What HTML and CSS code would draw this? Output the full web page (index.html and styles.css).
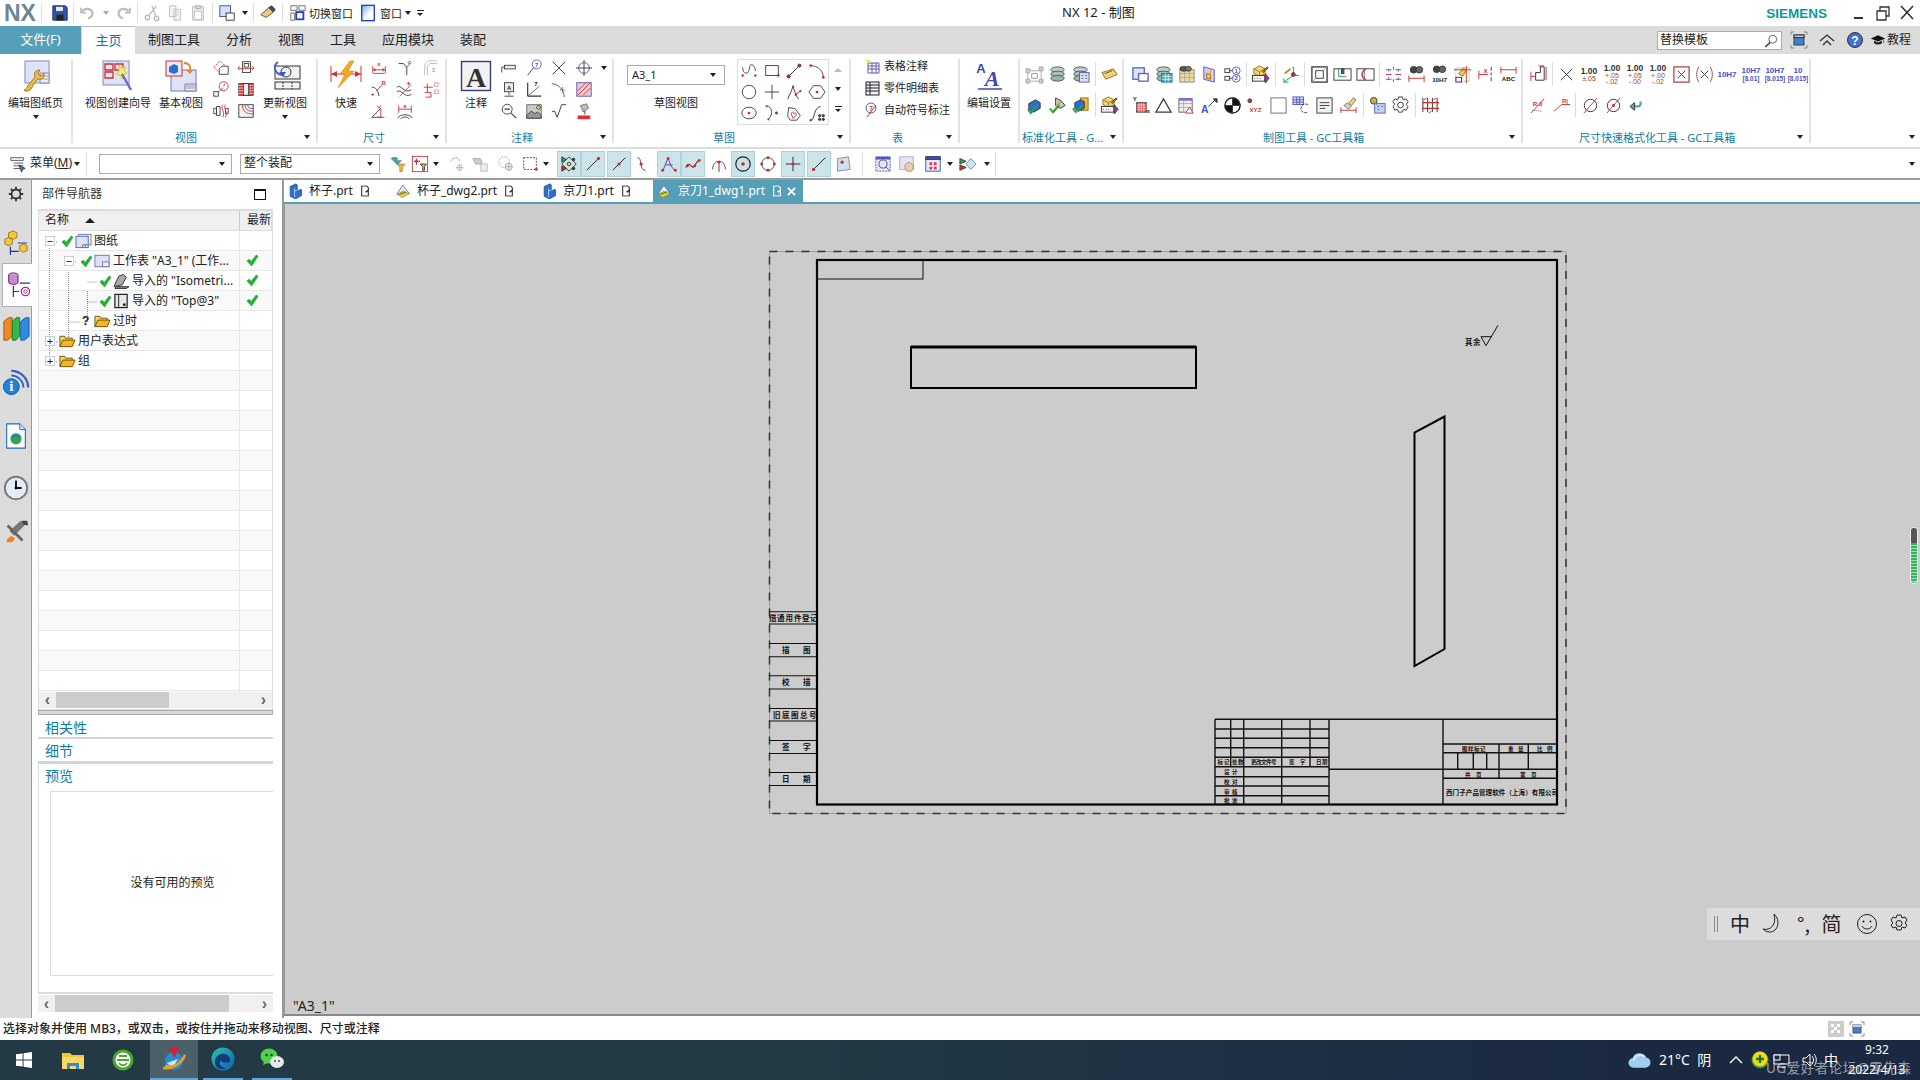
FILE: index.html
```html
<!DOCTYPE html>
<html lang="zh-CN">
<head>
<meta charset="utf-8">
<title>NX 12 - 制图</title>
<link rel="stylesheet" href="styles.css">
</head>
<body>
<svg class="defs" xmlns="http://www.w3.org/2000/svg">
  <symbol id="ck" viewBox="0 0 14 14"><path d="M1 7.5 3.5 5.5 5.5 8 11 1 13 2.5 6 13z" fill="#1fb52f" stroke="#0e8a1e" stroke-width=".5"/></symbol>
  <symbol id="fo" viewBox="0 0 18 16"><path d="M1 14V3h5l1 2h7v3" fill="#f4d678" stroke="#6a5010"/><path d="M1 14 4 7h13l-3 7z" fill="#f7b51e" stroke="#6a5010"/></symbol>
  <symbol id="blk" viewBox="0 0 16 18"><path d="M2 4 8 1l2 1v7l4-2 1 1v6l-7 4-6-3z" fill="#2c6fd0" stroke="#1a4a98" stroke-width=".8"/><path d="M7 6v10M7 9l3-1" stroke="#bcd4f6" fill="none"/></symbol>
  <symbol id="dw" viewBox="0 0 18 18"><path d="M1 13 8 2l8 10z" fill="#eef" stroke="#5a5ab0"/><path d="M2 13l5 4 9-5-8-3z" fill="#f0c838" stroke="#a07010" stroke-width=".6"/><path d="M4 13l8-3" stroke="#2f9a4a" stroke-width="1.4"/></symbol>
  <symbol id="dc" viewBox="0 0 12 14"><path d="M2 1h6l2 2v10H2z" fill="none" stroke="currentColor" stroke-width="1.3"/><path d="M6 8l4-3 1 1-3 3z" fill="currentColor"/></symbol>
  <symbol id="ln" viewBox="0 0 20 20"><path d="M3 17 17 3" stroke="#222" fill="none"/><circle cx="4" cy="16" r="1.7" fill="#cc2a2a"/><circle cx="16" cy="4" r="1.7" fill="#cc2a2a"/></symbol>
  <symbol id="pack" viewBox="0 0 20 20"><path d="M3 4 9 1l6 3v5l-6 3-6-3z" fill="#f5d37a" stroke="#a07a20"/><path d="M3 4l6 3 6-3M9 7v5" fill="none" stroke="#a07a20"/><rect x="1.500" y="11" width="13" height="6" fill="#fff" stroke="#333"/><path d="M3 14h1m2 0h1m2 0h1" stroke="#333"/><path d="M15 9l4 5-4 5z" fill="#a33aa8"/><path d="M12 7l5-5 1 1-5 5z" fill="#c99b3b"/></symbol>
  <symbol id="stack" viewBox="0 0 20 20"><ellipse cx="10" cy="5" rx="7" ry="3" fill="#bfcfc4" stroke="#556"/><ellipse cx="10" cy="9.500" rx="7" ry="3" fill="#a8c0b0" stroke="#556"/><ellipse cx="10" cy="14" rx="7" ry="3" fill="#9cb5a4" stroke="#556"/></symbol>
</svg>

<div class="app">
  <header class="titlebar">
    <span class="nx">NX</span>
    <i class="tv m5"></i>
    <span class="t m6"><svg class="i" viewBox="0 0 20 20"><path d="M2 2h14l2 2v14H2z" fill="#2e54b4" stroke="#1c2f78"/><rect x="5" y="2.500" width="9" height="6" fill="#dfe8f8"/><rect x="6" y="12" width="8" height="6" fill="#222"/></svg></span>
    <i class="tv m2"></i>
    <span class="t m25"><svg class="i" viewBox="0 0 20 20"><path d="M3 9c3-5 11-5 12 1 0 3-2 5-5 6" stroke="#bbb" stroke-width="2.400"/><path d="M2 4v6h6" fill="#ccc" stroke="#aaa"/></svg></span><span class="cr"><b class="down dim"></b></span>
    <span class="t"><svg class="i" viewBox="0 0 20 20"><path d="M17 9c-3-5-11-5-12 1 0 3 2 5 5 6" stroke="#bbb" stroke-width="2.400"/><path d="M18 4v6h-6" fill="#ccc" stroke="#aaa"/></svg></span>
    <i class="tv m25"></i>
    <span class="t m25"><svg class="i" viewBox="0 0 20 20"><path d="M15 2 7 12M10 2l4 11" stroke="#bbb" stroke-width="1.500"/><circle cx="5" cy="15" r="2.500" stroke="#bbb" stroke-width="1.500"/><circle cx="15" cy="16" r="2.500" stroke="#bbb" stroke-width="1.500"/></svg></span>
    <span class="t"><svg class="i" viewBox="0 0 20 20"><path d="M4 2h7v12H4zM9 6h7v12H9z" fill="#f4f4f4" stroke="#bbb"/><path d="M11 9h3m-3 3h3" stroke="#ccc"/></svg></span>
    <span class="t"><svg class="i" viewBox="0 0 20 20"><path d="M4 3h12v15H4z" fill="#eee" stroke="#bbb"/><path d="M7 2h6v3H7z" fill="#ddd" stroke="#aaa"/><path d="M6 8h8v9H6z" fill="#fff" stroke="#bbb"/></svg></span>
    <i class="tv m25"></i>
    <span class="t m25"><svg class="i" viewBox="0 0 20 20"><rect x="2" y="2" width="12" height="12" fill="#d8e0f8" stroke="#2d4aa8"/><rect x="9" y="10" width="9" height="8" fill="#fff" stroke="#333"/></svg></span><span class="cr"><b class="down"></b></span>
    <i class="tv m25"></i>
    <span class="t m2"><svg class="i" viewBox="0 0 20 20"><path d="M2 12 11 4l5 5-8 6z" fill="#e4c888" stroke="#6a5030"/><path d="M11 4l3-2 4 4-2 3z" fill="#2b4a9c"/></svg></span>
    <i class="tv m3"></i>
    <span class="t m3"><svg class="i" viewBox="0 0 20 20"><path d="M2 2h7v5H2zM11 2h7v5h-7zM2 10h4v8H2z" fill="#fff" stroke="#666"/><rect x="8" y="9" width="8" height="8" fill="#fff" stroke="#1f3fd0" stroke-width="2"/></svg></span>
    <span class="tt">切换窗口</span>
    <span class="t m3"><svg class="i" viewBox="0 0 20 20"><defs><linearGradient id="wg" x1="0" y1="0" x2="1" y2="1"><stop offset="0" stop-color="#7fa8e8"/><stop offset=".6" stop-color="#fff"/></linearGradient></defs><rect x="3" y="1.500" width="14" height="17" fill="url(#wg)" stroke="#1a3fd8" stroke-width="1.500"/></svg></span>
    <span class="tt m1">窗口</span><span class="cr"><b class="down"></b></span><span class="cr"><b class="more"></b></span>
    <span class="apptitle">NX 12 - 制图</span>
    <span class="siemens">SIEMENS</span>
    <span class="wc"><svg class="i" viewBox="0 0 20 20"><path d="M5 15h9" stroke="#333" stroke-width="2"/></svg></span>
    <span class="wc"><svg class="i" viewBox="0 0 20 20"><path d="M4 8h9v9H4zM7 8V4h9v9h-3" stroke="#333" stroke-width="1.300"/></svg></span>
    <span class="wc"><svg class="i" viewBox="0 0 20 20"><path d="M4 3l12 13M16 3 4 16" stroke="#333" stroke-width="1.600"/></svg></span>
  </header>

  <nav class="tabs">
    <span class="file">文件(F)</span>
    <span class="tab active">主页</span>
    <span class="tab">制图工具</span><span class="tab">分析</span><span class="tab">视图</span><span class="tab">工具</span><span class="tab">应用模块</span><span class="tab">装配</span>
    <span class="search">替换模板<svg class="srch" viewBox="0 0 16 16"><circle cx="10" cy="6" r="4.500" fill="#fff" stroke="#555"/><path d="M7 9.500 1.500 15" stroke="#555" stroke-width="2"/></svg></span>
    <span class="ti"><svg class="i" viewBox="0 0 20 20"><path d="M2 5V2h3M15 2h3v3M2 15v3h3M18 15v3h-3" stroke="#888"/><rect x="5" y="5" width="10" height="10" fill="#3f7fd0" stroke="#344"/><rect x="5" y="5" width="10" height="2.500" fill="#ccd"/></svg></span>
    <span class="ti"><svg class="i" viewBox="0 0 20 20"><path d="M3 11l7-6 7 6M6 15l4-4 4 4" stroke="#333" stroke-width="1.300"/></svg></span>
    <span class="ti"><svg class="i" viewBox="0 0 20 20"><circle cx="10" cy="10" r="7.500" fill="#3f6fd8"/><text x="10" y="14.500" class="qm">?</text></svg></span>
    <span class="cap"><svg class="i" viewBox="0 0 20 20"><path d="M1 8 10 4l9 4-9 4z" fill="#111"/><path d="M5 11v3c3 2 7 2 10 0v-3l-5 2z" fill="#222"/><path d="M17 9v5" stroke="#25c"/></svg>教程</span>
  </nav>

  <section class="ribbon">
    <div class="group g1"><div class="body">
      <div class="lg"><svg class="big" viewBox="0 0 32 32"><rect x="5" y="1" width="24" height="22" fill="#dfe3f6" stroke="#8088c8"/><path d="M20 13h9v10h-9z" fill="#eee" stroke="#8088c8"/><path d="M21 16h7m-7 3h7" stroke="#999"/><path d="M4 30c3 0 3-5 7-8l4-5c-2-4 1-7 5-7l-2 4 3 2 3-3c1 4-2 7-6 6l-5 6c-1 4-4 7-8 6z" fill="#e8bb4a" stroke="#a07a20"/></svg><span>编辑图纸页</span><b class="down"></b></div>
    </div></div>

    <div class="group g2"><div class="body">
      <div class="lg w66 ml12"><svg class="big" viewBox="0 0 32 32"><rect x="1" y="1" width="26" height="24" fill="#dfe3f6" stroke="#8088c8"/><path d="M3 4h8v6H3zM13 4h8v6h-8zM3 12h8v6H3z" fill="none" stroke="#cc3030" stroke-width="1.300"/><path d="M17 5l2 3 4-1-1 4 3 2-4 2-1 4-2-4-4-1 3-2z" fill="#f2ee70" stroke="#d8c840"/><path d="M20 14 29 30" stroke="#6a70c8" stroke-width="2.500"/></svg><span>视图创建向导</span></div>
      <div class="lg w44 ml8"><svg class="big" viewBox="0 0 32 32"><rect x="6" y="10" width="25" height="21" fill="#dfe3f6" stroke="#7078c8"/><path d="M20 24h11v7H20z" fill="#eee" stroke="#7078c8"/><path d="M21 26h9m-9 2h9" stroke="#999"/><rect x="1" y="1" width="16" height="15" fill="#e8e8f4" stroke="#cc3030"/><path d="M4 7 9 4l4 2v6l-4 2-5-2z" fill="#2c6fd0"/><path d="M19 3c5 0 7 3 6 8" stroke="#e08a20" stroke-width="1.800" fill="none"/><path d="M21 10h7l-3 4z" fill="#e08a20"/></svg><span>基本视图</span></div>
      <div class="ic2 ml55">
        <span class="c"><svg class="i" viewBox="0 0 20 20"><path d="M2 9 9 2l5 5-7 7z" class="r" stroke-dasharray="2 1"/><path d="M8 17v-6l3-3h7v9z" fill="#fff"/></svg></span>
        <span class="c"><svg class="i" viewBox="0 0 20 20"><rect x="6" y="3" width="9" height="12"/><rect x="8" y="5" width="5" height="4"/><path d="M1 10c2 1 16 1 18 0M1 10l2-2M1 10l2 2M19 10l-2-2M19 10l-2 2" class="r"/></svg></span>
        <span class="c"><svg class="i" viewBox="0 0 20 20"><circle cx="13" cy="7" r="5" class="r"/><path d="M13 7l1-3M2 17 12 9" class="r"/><rect x="2" y="13" width="5" height="5" fill="#fff"/></svg></span>
        <span class="c"><svg class="i" viewBox="0 0 20 20"><rect x="2" y="4" width="16" height="13" fill="#d44"/><path d="M2 6h16M2 9h16M2 12h16M2 15h16" stroke="#fff" stroke-dasharray="2 1"/><rect x="7" y="4" width="6" height="13" fill="#eee" stroke="#333"/></svg></span>
        <span class="c"><svg class="i" viewBox="0 0 20 20"><path d="M2 7h3v6H2zM15 7h3v6h-3zM5 5h4v10H5z"/><path d="M12 3c-3 4 3 8 0 14M15 3c-3 4 3 8 0 14" class="r"/></svg></span>
        <span class="c"><svg class="i" viewBox="0 0 20 20"><rect x="2" y="3" width="16" height="14" fill="#f2f2f2"/><path d="M6 3c0 7 4 11 12 10M9 3c0 5 3 8 9 7" class="r"/><path d="M12 3c0 3 2 5 6 4" stroke="#5058c0"/></svg></span>
      </div>
      <div class="lg w44 ml45"><svg class="big" viewBox="0 0 32 32"><rect x="6" y="6" width="25" height="13" fill="#f2f2f2" stroke="#333"/><rect x="6" y="22" width="25" height="7" fill="#f2f2f2" stroke="#333"/><path d="M14 22v7M23 22v7" stroke="#333" stroke-dasharray="2 1"/><circle cx="17" cy="12" r="5" fill="none" stroke="#333"/><path d="M13 15C6 14 3 6 9 2" fill="none" stroke="#5058d0" stroke-width="1.800"/><path d="M10 12h7l-3 5z" fill="#2d5ec8"/></svg><span>更新视图</span><b class="down"></b></div>
    </div><div class="foot pl102"><span>视图</span><b class="down"></b></div></div>

    <div class="group g3"><div class="body">
      <div class="lg w30 ml13"><svg class="big" viewBox="0 0 32 32"><path d="M1 6v16M31 6v16" stroke="#c9343a"/><path d="M1 14h30" stroke="#c9343a"/><path d="M1 14l6-3v6zM31 14l-6-3v6z" fill="#c9343a"/><path d="M20 1 10 14h5L8 28l16-17h-6l6-10z" fill="#f5a623" stroke="#e2851a" stroke-width=".6"/></svg><span>快速</span></div>
      <div class="ic3 ml5">
        <span class="c"><svg class="i" viewBox="0 0 20 20"><path d="M3 8v8M17 8v8M3 12h14M4 16h12" class="r"/><path d="M3 12l3-2v4zM17 12l-3-2v4z" fill="#c9343a" stroke="none"/><text x="10" y="8" class="tiny red">x</text></svg></span>
        <span class="c"><svg class="i" viewBox="0 0 20 20"><path d="M3 5h5l4 4v9" fill="#f4f4f4"/><path d="M11 10l6-6" class="r"/><text x="15" y="5" class="tiny red">c</text></svg></span>
        <span class="c"><svg class="i" viewBox="0 0 20 20"><path d="M3 18V8c0-4 3-6 6-6h8M6 18V9c0-2 2-4 4-4h7" stroke="#bbb"/><text x="13" y="14" class="tiny gry">Σ</text></svg></span>
        <span class="c"><svg class="i" viewBox="0 0 20 20"><path d="M2 8c4 0 7 3 8 10" /><path d="M7 12l7-7" class="r"/><text x="15" y="6" class="tiny red">R</text><text x="3" y="18" class="tiny blk">+</text></svg></span>
        <span class="c"><svg class="i" viewBox="0 0 20 20"><path d="M1 8c5-4 8 8 16 3M1 13c5-4 8 8 16 3" /><path d="M4 18 17 5" class="r"/><path d="M14 2v4M12 4h4" class="r"/></svg></span>
        <span class="c"><svg class="i" viewBox="0 0 20 20"><path d="M2 8h10M6 4v10M3 14h7v5M4 19h6" class="r"/><path d="M14 3h4v4h-4zM14 11h4v4h-4z" class="r" stroke-dasharray="1 1"/></svg></span>
        <span class="c"><svg class="i" viewBox="0 0 20 20"><path d="M2 17 12 7M2 17h11"/><path d="M8 4l2 3 2-3M12 7v10M9 17h7" class="r"/></svg></span>
        <span class="c"><svg class="i" viewBox="0 0 20 20"><path d="M3 4v8M17 4v8M3 8h14" class="r"/><path d="M2 18c2-5 14-5 16 0M5 19c2-3 8-3 10 0"/><text x="10" y="7" class="tiny red">x</text></svg></span>
      </div>
    </div><div class="foot pl45"><span>尺寸</span><b class="down"></b></div></div>

    <div class="group g4"><div class="body">
      <div class="lg w30 ml14"><svg class="big" viewBox="0 0 32 32"><rect x="1.500" y="1.500" width="29" height="29" fill="#f2f2f2" stroke="#3f3a72" stroke-width="1.400"/><text x="16" y="27" class="bigA">A</text></svg><span>注释</span></div>
      <div class="ic4 ml55">
        <span class="c"><svg class="i" viewBox="0 0 20 20"><path d="M2 15V9h3"/><rect x="5" y="7" width="12" height="4" fill="#eee"/></svg></span>
        <span class="c"><svg class="i" viewBox="0 0 20 20"><circle cx="13" cy="6" r="5" stroke="#5058c0"/><text x="13" y="9" class="tiny blu">7</text><path d="M3 18 10 9"/></svg></span>
        <span class="c"><svg class="i" viewBox="0 0 20 20"><path d="M3 3l14 14M17 3 3 17" stroke="#333"/></svg></span>
        <span class="c"><svg class="i" viewBox="0 0 20 20"><circle cx="10" cy="10" r="6" stroke="#5058c0"/><path d="M10 1v18M1 10h18" stroke="#333"/></svg></span>
        <span class="cs"><b class="down"></b></span>
        <span class="c"><svg class="i" viewBox="0 0 20 20"><rect x="5" y="3" width="10" height="10" fill="#eee"/><text x="10" y="11" class="tiny blk">A</text><path d="M10 13v4M5 18h10"/></svg></span>
        <span class="c"><svg class="i" viewBox="0 0 20 20"><path d="M3 18V3M3 18h15" stroke="#333" stroke-width="1.300"/><path d="M4 17 16 7" stroke="#5058c0"/><text x="12" y="7" class="tiny blk">7</text></svg></span>
        <span class="c"><svg class="i" viewBox="0 0 20 20"><path d="M2 4c8 1 13 6 14 15" stroke="#3a4fa8"/><path d="M14 8v6M11 11h6" stroke="#444" stroke-dasharray="1.500 1"/></svg></span>
        <span class="c"><svg class="i" viewBox="0 0 20 20"><rect x="2" y="3" width="16" height="15" fill="#f0c8d0" stroke="#5058c0"/><path d="M3 12 12 3M3 17 17 3M9 17l8-8" stroke="#c9343a"/></svg></span>
        <span class="cs"></span>
        <span class="c"><svg class="i" viewBox="0 0 20 20"><circle cx="8" cy="8" r="5.500"/><path d="M5 8h6M12 12l6 6" stroke-width="1.300"/></svg></span>
        <span class="c"><svg class="i" viewBox="0 0 20 20"><rect x="2" y="3" width="16" height="15" fill="#ccc" stroke="#666"/><path d="M2 15l5-5 4 3 3-2 4 4v3H2z" fill="#999"/><circle cx="15" cy="6" r="2" fill="#f3e35a"/></svg></span>
        <span class="c"><svg class="i" viewBox="0 0 20 20"><path d="M2 11l3-1 3 7 5-14h5" stroke="#333"/></svg></span>
        <span class="c"><svg class="i" viewBox="0 0 20 20"><path d="M6 4l7-2 2 5-6 4z" fill="#bbb" stroke="#777"/><path d="M11 10v4"/><rect x="3" y="15" width="14" height="4" fill="#e03030" stroke="none"/></svg></span>
      </div>
    </div><div class="foot pl64"><span>注释</span><b class="down"></b></div></div>

    <div class="group g5"><div class="body">
      <div class="sk"><div class="dd"><span>A3_1</span><b class="down"></b></div><span class="sklabel">草图视图</span></div>
      <div class="gal">
        <span class="c22"><svg class="i" viewBox="0 0 20 20"><path d="M3 6c0 8 6 8 7 3s1-6 3-6 4 3 4 7"/><circle cx="3" cy="15" r="1.300" class="dot"/><circle cx="17" cy="15" r="1.300" class="dot"/></svg></span>
        <span class="c22"><svg class="i" viewBox="0 0 20 20"><rect x="3" y="4" width="14" height="11"/><circle cx="17" cy="15" r="1.500" class="dot"/></svg></span>
        <span class="c22"><svg class="i" viewBox="0 0 20 20"><use href="#ln"/></svg></span>
        <span class="c22"><svg class="i" viewBox="0 0 20 20"><path d="M3 4c8 0 14 6 14 13"/><circle cx="3" cy="4" r="1.500" class="dot"/><circle cx="17" cy="17" r="1.500" class="dot"/></svg></span>
        <span class="c22"><svg class="i" viewBox="0 0 20 20"><circle cx="10" cy="10" r="7.500"/></svg></span>
        <span class="c22"><svg class="i" viewBox="0 0 20 20"><path d="M10 2v16M2 10h16"/></svg></span>
        <span class="c22"><svg class="i" viewBox="0 0 20 20"><path d="M3 18 9 4l3 9 5-4M12 13l3 5"/><circle cx="9" cy="4" r="1.300" class="dot"/><circle cx="12" cy="13" r="1.300" class="dot"/><circle cx="17" cy="9" r="1.300" class="dot"/></svg></span>
        <span class="c22"><svg class="i" viewBox="0 0 20 20"><path d="M6 3h8l5 7-5 7H6l-5-7z"/><circle cx="10" cy="10" r="1.500" class="dot"/></svg></span>
        <span class="c22"><svg class="i" viewBox="0 0 20 20"><ellipse cx="10" cy="10" rx="8" ry="6.500"/><circle cx="10" cy="10" r="1.500" class="dot"/></svg></span>
        <span class="c22"><svg class="i" viewBox="0 0 20 20"><path d="M4 2c6 1 8 9 2 15"/><circle cx="4" cy="2.500" r="1.200" class="dot"/><circle cx="6" cy="17" r="1.200" class="dot"/><circle cx="15" cy="10" r="1.200" fill="#666"/></svg></span>
        <span class="c22"><svg class="i" viewBox="0 0 20 20"><path d="M4 4l7 1 6 8-4 5H6l-3-4z"/><path d="M7 11c0-3 3-2 3 0 0-2 4-1 2 2l-3 3z" stroke="#c9343a"/></svg></span>
        <span class="c22"><svg class="i" viewBox="0 0 20 20"><path d="M3 18c5 0 3-15 11-15" stroke="#333"/><circle cx="13" cy="13" r="1.300" fill="#333"/><circle cx="17" cy="13" r="1.300" fill="#333"/><circle cx="13" cy="17" r="1.300" fill="#333"/><circle cx="17" cy="17" r="1.300" fill="#333"/><circle cx="3" cy="18" r="1.300" class="dot"/></svg></span>
      </div>
      <div class="scr"><b class="up"></b><b class="down"></b><b class="more"></b></div>
    </div><div class="foot pl99"><span>草图</span><b class="down"></b></div></div>

    <div class="group g6"><div class="body col">
      <div class="rw"><svg class="s16" viewBox="0 0 16 16"><path d="M4 5h11v10H4zM4 8h11M4 11h11M8 5v10M12 5v10" stroke="#5a5ab0"/><path d="M1 1l3 1 1-1 1 3-2 1z" fill="#f2e640"/></svg>表格注释</div>
      <div class="rw"><svg class="s16" viewBox="0 0 16 16"><rect x="2" y="2" width="13" height="13" fill="#eef" stroke="#222"/><path d="M2 5h13M2 8h13M2 11h13M6 2v13" stroke="#222"/></svg>零件明细表</div>
      <div class="rw"><svg class="s16" viewBox="0 0 16 16"><circle cx="7" cy="6" r="5" stroke="#5058c0"/><text x="7" y="9" class="tiny red">7</text><path d="M3 15 12 3" stroke="#c9343a"/></svg>自动符号标注</div>
    </div><div class="foot pl41"><span>表</span><b class="down"></b></div></div>

    <div class="group g7"><div class="body">
      <div class="lg wfull"><svg class="big" viewBox="0 0 32 32"><text x="8" y="13" class="aa">A</text><text x="19" y="26" class="ab">A</text><path d="M5 29h24" stroke="#3f45b0" stroke-width="1.500"/></svg><span>编辑设置</span></div>
    </div></div>

    <div class="group g8"><div class="body col2 pl25">
      <div class="ro">
        <span class="c"><svg class="i" viewBox="0 0 20 20"><path d="M3 6h14v11H3z" stroke="#aaa"/><path d="M7 9h6v5H7z" stroke="#999"/><path d="M1 4h4v4H1zM15 2h4v4h-4zM1 15h4v4H1zM15 15h4v4h-4z" fill="#ccc" stroke="#aaa"/></svg></span>
        <span class="c mr2"><svg class="i" viewBox="0 0 20 20"><use href="#stack"/></svg></span>
        <span class="c"><svg class="i" viewBox="0 0 20 20"><use href="#stack"/><rect x="9" y="8" width="10" height="10" fill="#dfe3f6" stroke="#5a5ab0"/><path d="M11 11h2m-2 3h2m2-3h2m-2 3h2" stroke="#5a5ab0"/></svg></span>
        <i class="v mx3"></i>
        <span class="c"><svg class="i" viewBox="0 0 20 20"><path d="M2 8l12-4 4 6-12 5z" fill="#f2cf7a" stroke="#96701c"/><path d="M5 9l8-3" stroke="#555"/></svg></span>
      </div>
      <div class="ro">
        <span class="c"><svg class="i" viewBox="0 0 20 20"><path d="M4 8 11 4l5 3v6l-7 4-5-3z" fill="#2c6fd0"/><path d="M3 14l3 4 7-9" stroke="#22a83a" stroke-width="2"/></svg></span>
        <span class="c mr2"><svg class="i" viewBox="0 0 20 20"><path d="M8 2l6 3 4 5-5 3-5-3z" fill="#bcd"/><path d="M5 18 13 6" stroke="#d8a42a" stroke-width="2.500"/><path d="M2 13l3 4 7-7" stroke="#22a83a" stroke-width="2"/></svg></span>
        <span class="c"><svg class="i" viewBox="0 0 20 20"><rect x="10" y="2" width="8" height="13" fill="#f2b72c" stroke="#9a7210"/><path d="M4 7 10 4l4 2v7l-6 3-4-3z" fill="#2c6fd0"/><path d="M2 13l3 4 7-7" stroke="#22a83a" stroke-width="2"/></svg></span>
        <i class="v mx3"></i>
        <span class="c"><svg class="i" viewBox="0 0 20 20"><use href="#pack"/></svg></span>
      </div>
    </div><div class="foot pl2"><span>标准化工具 - G...</span><b class="down"></b></div></div>

    <div class="group g9"><div class="body col2 pl45">
      <div class="ro">
        <span class="c"><svg class="i" viewBox="0 0 20 20"><rect x="2" y="3" width="12" height="12" fill="#dfe3f6" stroke="#5a66b8" stroke-width="1.400"/><rect x="8" y="9" width="10" height="8" fill="#fff" stroke="#5a66b8" stroke-width="1.400"/></svg></span>
        <span class="c"><svg class="i" viewBox="0 0 20 20"><use href="#stack"/><rect x="8" y="9" width="11" height="9" fill="#48aebe" stroke="#2b6f7c"/><path d="M8 12h11m-11 3h11M12 9v9m3-9v9" stroke="#fff" stroke-width=".7"/></svg></span>
        <span class="c"><svg class="i" viewBox="0 0 20 20"><rect x="3" y="5" width="15" height="13" fill="#efdc9a" stroke="#888"/><path d="M3 9h15m-15 4h15M8 5v13m5-13v13" stroke="#aaa"/><ellipse cx="7" cy="4" rx="4" ry="2.500" fill="#555"/><ellipse cx="12" cy="4" rx="3" ry="2.500" fill="#777"/></svg></span>
        <span class="c"><svg class="i" viewBox="0 0 20 20"><path d="M4 2l11 3v13L4 15z" fill="#dcc8f0" stroke="#5a5ab0"/><path d="M7 9l4 1v5l-4-1z" fill="#f2c84a" stroke="#9a7210"/><path d="M11 5v6" stroke="#d89a2a"/></svg></span>
        <span class="c"><svg class="i" viewBox="0 0 20 20"><rect x="2" y="4" width="5" height="4"/><rect x="2" y="12" width="5" height="4"/><path d="M7 6h3M7 14h3"/><circle cx="14" cy="6" r="4" stroke="#5058c0"/><circle cx="14" cy="14" r="4" stroke="#5058c0"/><text x="14" y="8" class="tiny blu">1</text><text x="14" y="16" class="tiny blu">2</text></svg></span>
        <i class="v s5"></i>
        <span class="c"><svg class="i" viewBox="0 0 20 20"><use href="#pack"/></svg></span>
        <i class="v s7"></i>
        <span class="c"><svg class="i" viewBox="0 0 20 20"><path d="M4 9l6-5" stroke="#e07a28" stroke-width="2"/><path d="M13 11V4M13 11h6M13 11 3 18M3 18v-4M3 18h5" stroke="#16a34a"/><circle cx="13" cy="10" r="2" fill="#c9343a"/><path d="M12 3h2" stroke="#333"/></svg></span>
        <i class="v s6"></i>
        <span class="c"><svg class="i" viewBox="0 0 20 20"><rect x="2" y="2" width="16" height="16" stroke-width="1.400"/><rect x="6" y="6" width="8" height="8" fill="#fff"/><path d="M2 18 6 14M14 6l4-4" stroke="#aaa"/></svg></span>
        <span class="c"><svg class="i" viewBox="0 0 20 20"><rect x="1" y="4" width="18" height="12"/><path d="M6 4v8h8M9 4v5" stroke="#2aa344"/><rect x="9" y="4" width="2.500" height="5" fill="#5058c0"/></svg></span>
        <span class="c"><svg class="i" viewBox="0 0 20 20"><rect x="1" y="4" width="18" height="12"/><path d="M10 4c-5 4-5 8 0 12" stroke="#c9343a" stroke-width="1.400"/><path d="M10 4c-2 4-2 8 0 12" stroke="#5058c0"/></svg></span>
        <i class="v s5"></i>
        <span class="c"><svg class="i" viewBox="0 0 20 20"><path d="M5 4v3M2 5h6M5 13v3M2 15h6M15 4v3M12 5h6M15 13v3M12 15h6" stroke="#5a5ab0"/><path d="M2 10h6M12 10h6M10 2v3M10 15v3" stroke="#c9343a"/></svg></span>
        <span class="c"><svg class="i" viewBox="0 0 20 20"><circle cx="7" cy="5" r="3.500" fill="#444"/><circle cx="13" cy="5" r="3.500" fill="#666"/><path d="M2 11v7M18 11v7M2 14h16" class="r"/></svg></span>
        <span class="c"><svg class="i" viewBox="0 0 20 20"><circle cx="7" cy="4.500" r="3.500" fill="#444"/><circle cx="13" cy="4.500" r="3.500" fill="#666"/><text x="10" y="18" class="tiny8 blk">10H7</text></svg></span>
        <span class="c"><svg class="i" viewBox="0 0 20 20"><rect x="3" y="3" width="14" height="14" fill="#fff" stroke="#ccc"/><path d="M6 9l5-6 3 3-4 6z" fill="#f2c84a" stroke="#9a7210"/><path d="M1 5h18M14 1v18" class="r"/><rect x="3" y="13" width="6" height="5" stroke="#333388"/></svg></span>
        <span class="c"><svg class="i" viewBox="0 0 20 20"><path d="M3 6v9M3 10h10" class="r"/><text x="10" y="8" class="tiny red">X</text><path d="M16 2v4M16 8v3M16 13v4" stroke="#333"/></svg></span>
        <span class="c"><svg class="i" viewBox="0 0 20 20"><path d="M2 2v7M18 2v7M2 5h16" class="r"/><text x="10" y="17" class="tiny8 blk">ABC</text></svg></span>
      </div>
      <div class="ro">
        <span class="c"><svg class="i" viewBox="0 0 20 20"><rect x="6" y="7" width="10" height="10" fill="#e44"/><path d="M6 9.500h10M6 12h10M6 14.500h10M8.500 7v10M11 7v10M13.500 7v10" stroke="#fff" stroke-width=".7"/><text x="4" y="5" class="tiny blk">Y</text><text x="18" y="18" class="tiny blk">x</text></svg></span>
        <span class="c"><svg class="i" viewBox="0 0 20 20"><path d="M10 3 18 17H2z" stroke-width="1.300"/></svg></span>
        <span class="c"><svg class="i" viewBox="0 0 20 20"><rect x="2" y="3" width="14" height="14" fill="#f2f2f2" stroke="#666"/><rect x="2" y="2" width="14" height="3" fill="#8a6cc8" stroke="none"/><path d="M2 8h14M2 12h14M7 5v12" stroke="#aaa"/><path d="M13 12l4 6H9z" fill="#fff" stroke="#c9343a"/></svg></span>
        <span class="c"><svg class="i" viewBox="0 0 20 20"><text x="5" y="18" class="tiny10 blu">A</text><path d="M9 11 17 3" stroke="#333"/><path d="M14 3h4v4z" fill="#333"/></svg></span>
        <span class="c"><svg class="i" viewBox="0 0 20 20"><circle cx="10" cy="10" r="8" fill="#fff" stroke="#111" stroke-width="1.400"/><path d="M10 2a8 8 0 0 1 8 8h-8zM10 18a8 8 0 0 1-8-8h8z" fill="#111"/></svg></span>
        <span class="c"><svg class="i" viewBox="0 0 20 20"><circle cx="4" cy="5" r="2" fill="#c9343a"/><text x="10" y="17" class="tiny8 red">XYZ</text></svg></span>
        <span class="c"><svg class="i" viewBox="0 0 20 20"><rect x="2" y="2" width="16" height="16" fill="#fff" stroke="#888" stroke-width="1.200"/></svg></span>
        <span class="c"><svg class="i" viewBox="0 0 20 20"><rect x="1" y="1" width="11" height="8" fill="#dfe3f6" stroke="#5058c0"/><path d="M1 4h11M1 6.500h11M5 1v8M8 1v8" stroke="#5058c0"/><path d="M17 9c-5-2-9 2-7 6 1 3 4 3 7 2" stroke-dasharray="3 1"/></svg></span>
        <span class="c"><svg class="i" viewBox="0 0 20 20"><rect x="2" y="2" width="16" height="16" fill="#f2f2f2"/><path d="M5 7h10M5 10h10M5 13h6"/></svg></span>
        <span class="c mx1"><svg class="i" viewBox="0 0 20 20"><path d="M10 8 15 2l3 2-5 6z" fill="#e8d48a" stroke="#8a7a40"/><path d="M5 10l4-3 4 4-3 3z" fill="#ccc" stroke="#888"/><path d="M2 12v6M18 12v6M2 15h16" class="r"/></svg></span>
        <i class="v s5"></i>
        <span class="c"><svg class="i" viewBox="0 0 20 20"><circle cx="6" cy="5" r="3.500" fill="#e2a83a"/><rect x="7" y="8" width="11" height="10" fill="#c4d2f2" stroke="#5a66b8"/><path d="M10 11h2m-2 3h2m2-3h2" stroke="#5a66b8"/><path d="M5 5l5 5" stroke="#4a8"/></svg></span>
        <span class="c"><svg class="i" viewBox="0 0 20 20"><path d="M8 1h4l1 3 3-1 2 3-2 3 2 2-2 4-3-1-1 3H8l-1-3-3 1-2-4 2-2-2-3 2-3 3 1z"/><circle cx="10" cy="9.500" r="3"/></svg></span>
        <i class="v s7"></i>
        <span class="c"><svg class="i" viewBox="0 0 20 20"><path d="M2 2v15M7 2v15M12 2v15M17 2v15" stroke="#333"/><path d="M1 7h18M1 13h18" stroke="#d02a2a" stroke-width="1.400"/><path d="M3 4l3-2M8 18l3-2M13 4l3-2" stroke="#d02a2a"/></svg></span>
      </div>
    </div><div class="foot pl139"><span>制图工具 - GC工具箱</span><b class="down"></b></div></div>

    <div class="group g10"><div class="body col2 pl35">
      <div class="ro">
        <span class="c"><svg class="i" viewBox="0 0 20 20"><path d="M7 16V8h5V2h4v14z" stroke="#333"/><path d="M2 7v10M2 12h5M18 2v14M10 1h6" class="r"/></svg></span>
        <i class="v s4"></i>
        <span class="c"><svg class="i" viewBox="0 0 20 20"><path d="M4 4l12 12M16 4 4 16"/></svg></span>
        <span class="c"><span class="nm"><u>1.00</u><em class="rd">±.05</em></span></span>
        <span class="c mr2"><span class="nm"><u>1.00</u><em class="rd">+.05<br>-.02</em></span></span>
        <span class="c"><span class="nm"><u>1.00</u><em class="rd">+.05<br>-.00</em></span></span>
        <span class="c"><span class="nm"><u>1.00</u><em class="rd">+.00<br>-.02</em></span></span>
        <span class="c"><svg class="i" viewBox="0 0 20 20"><rect x="2" y="2" width="16" height="16" stroke="#b0403a" stroke-width="1.300"/><path d="M6 6l8 8M14 6l-8 8"/></svg></span>
        <span class="c"><svg class="i" viewBox="0 0 20 20"><path d="M4 2C1 7 1 13 4 18M16 2c3 5 3 11 0 16" stroke="#b0403a"/><path d="M6 6l8 8M14 6l-8 8"/></svg></span>
        <span class="c mr1"><span class="hb">10H7</span></span>
        <span class="c mr1"><span class="hb">10H7<small>[8.01]</small></span></span>
        <span class="c"><span class="hb">10H7<small>[8.015]</small></span></span>
        <span class="c"><span class="hb">10<small>[8.015]</small></span></span>
      </div>
      <div class="ro">
        <span class="c"><svg class="i" viewBox="0 0 20 20"><path d="M2 18 16 3" class="r"/><path d="M4 15l9 1" stroke="#c9343a" stroke-dasharray="1 1"/><text x="9" y="10" class="tiny red">R.0</text></svg></span>
        <span class="c"><svg class="i" viewBox="0 0 20 20"><path d="M2 16 10 9h9" class="r"/><text x="13" y="7" class="tiny red">R</text><text x="16" y="7" class="tiny red">|</text></svg></span>
        <i class="v s6"></i>
        <span class="c"><svg class="i" viewBox="0 0 20 20"><circle cx="10" cy="10" r="6.500" stroke="#333"/><path d="M3 18 17 2" class="r"/></svg></span>
        <span class="c"><svg class="i" viewBox="0 0 20 20"><circle cx="10" cy="10" r="6.500" stroke="#333"/><path d="M3 18 17 2" class="r"/><circle cx="10" cy="10" r="1.500" class="dot"/></svg></span>
        <span class="c"><svg class="i" viewBox="0 0 20 20"><path d="M5 11h6c3 0 4-2 3-5" stroke="#59a6b0" stroke-width="2.400"/><path d="M8 7l-5 4 5 4z" fill="#59a6b0"/></svg></span>
      </div>
    </div><div class="foot pl56"><span>尺寸快速格式化工具 - GC工具箱</span><b class="down"></b></div></div>
    <div class="gend"><b class="down"></b></div>
  </section>

  <section class="toolbar">
    <span class="c24 ml6"><svg class="i" viewBox="0 0 20 20"><path d="M2 3h14v3H2zM5 9h11M5 12h11M5 15h8" stroke="#555"/><path d="M11 11l7 4-3 1-1 3z" fill="#48a" stroke="#235"/></svg></span>
    <span class="menu">菜单(<u>M</u>)</span><b class="down ml4"></b>
    <i class="tsep ml6"></i>
    <span class="combo w133"><b class="down"></b></span>
    <span class="combo w140"><em>整个装配</em><b class="down"></b></span>
    <span class="c22 ml7"><svg class="i" viewBox="0 0 20 20"><path d="M2 4c3-2 6-2 8 0l-2 2h6l-5 5" fill="#3fa6a8" stroke="#2a7a7c" stroke-width=".5"/><path d="M9 10h9l-3 4v4l-3 1v-5z" fill="#e8b54a" stroke="#9a7210" stroke-width=".6"/></svg></span>
    <span class="c22"><svg class="i" viewBox="0 0 20 20"><rect x="1.500" y="1.500" width="17" height="17" fill="#fff" stroke="#c9343a"/><path d="M6 4v7M3 7h7" stroke="#333"/><circle cx="6" cy="7" r="1.500" class="dot"/><path d="M10 10h7l-2 3v4h-2v-4z" fill="#e8b54a"/></svg></span>
    <span class="c10"><b class="down"></b></span>
    <span class="c22 ml5"><svg class="i" viewBox="0 0 20 20"><path d="M3 7c3-5 9-5 10 0" stroke="#aaa"/><path d="M13 10v8M9 14h8" stroke="#aaa"/><circle cx="13" cy="14" r="3" stroke="#bbb"/></svg></span>
    <span class="c22 ml1"><svg class="i" viewBox="0 0 20 20"><path d="M2 4h8l2 3v3H5z" fill="#ccc" stroke="#aaa"/><rect x="11" y="10" width="7" height="8" fill="#eee" stroke="#bbb"/></svg></span>
    <span class="c22 ml4"><svg class="i" viewBox="0 0 20 20"><circle cx="8" cy="8" r="6" stroke="#aaa" stroke-dasharray="2 1"/><circle cx="13" cy="13" r="4" fill="#eee" stroke="#aaa"/><path d="M13 9v8M9 13h8" stroke="#aaa"/></svg></span>
    <span class="c22 ml2"><svg class="i" viewBox="0 0 20 20"><rect x="3" y="3" width="14" height="13" stroke="#333" stroke-dasharray="2 1.500"/><circle cx="17" cy="16" r="1.500" class="dot"/></svg></span>
    <span class="c10"><b class="down"></b></span>
    <span class="on ml6"><svg class="i" viewBox="0 0 20 20"><path d="M10 2l8 8-8 8-8-8z" stroke="#333"/><circle cx="10" cy="10" r="2" fill="#f0d030"/><path d="M2 2l5 3-5 3z" fill="#2aa344"/><path d="M2 12l5 3-5 3z" fill="#d02a2a"/><circle cx="15" cy="5" r="1.500" fill="#333"/><circle cx="15" cy="15" r="1.500" fill="#333"/></svg></span>
    <span class="on"><svg class="i" viewBox="0 0 20 20"><path d="M3 17 17 3" stroke="#222"/><circle cx="16" cy="4" r="1.800" class="dot"/></svg></span>
    <span class="on ml2"><svg class="i" viewBox="0 0 20 20"><path d="M3 17 17 3" stroke="#222"/><circle cx="10" cy="10" r="1.800" class="dot"/></svg></span>
    <span class="c22"><svg class="i" viewBox="0 0 20 20"><path d="M5 3c6 0 1 14 9 14"/><circle cx="9" cy="10" r="1.800" class="dot"/></svg></span>
    <span class="on ml4"><svg class="i" viewBox="0 0 20 20"><path d="M3 18 9 3l3 9 5 6M6 11h8" stroke="#6a30b0"/><circle cx="9" cy="4" r="1.600" class="dot"/><circle cx="3" cy="17" r="1.600" class="dot"/><circle cx="17" cy="17" r="1.600" class="dot"/></svg></span>
    <span class="on"><svg class="i" viewBox="0 0 20 20"><path d="M2 14c4-10 7 4 10-2s4-6 6-6" stroke="#8a1a1a" stroke-width="1.300"/><circle cx="4" cy="12" r="1.500" class="dot"/><circle cx="12" cy="12" r="1.500" class="dot"/><circle cx="17" cy="6" r="1.500" class="dot"/></svg></span>
    <span class="c22 ml3"><svg class="i" viewBox="0 0 20 20"><path d="M10 8v11M3 16c0-6 3-9 7-9s7 3 7 9"/><circle cx="10" cy="8" r="1.500" class="dot"/></svg></span>
    <span class="on ml1"><svg class="i" viewBox="0 0 20 20"><circle cx="10" cy="10" r="8" stroke="#222" stroke-width="1.300"/><circle cx="10" cy="10" r="2" class="dot"/></svg></span>
    <span class="c22 ml2"><svg class="i" viewBox="0 0 20 20"><circle cx="10" cy="10" r="7"/><circle cx="10" cy="3" r="1.600" class="dot"/><circle cx="17" cy="10" r="1.600" class="dot"/><circle cx="10" cy="17" r="1.600" class="dot"/><circle cx="3" cy="10" r="1.600" class="dot"/></svg></span>
    <span class="on ml2"><svg class="i" viewBox="0 0 20 20"><path d="M10 2v16M2 10h16" stroke="#222"/><circle cx="10" cy="10" r="1.800" class="dot"/></svg></span>
    <span class="on ml2"><svg class="i" viewBox="0 0 20 20"><path d="M3 17 17 3" stroke="#222"/><circle cx="4" cy="16" r="1.800" class="dot"/></svg></span>
    <span class="c22 ml1"><svg class="i" viewBox="0 0 20 20"><path d="M4 4l12-2 2 14-14 2z" fill="#cfe0ee" stroke="#889"/><circle cx="9" cy="8" r="1.800" class="dot"/></svg></span>
    <i class="tsep ml8"></i>
    <span class="c22 ml9"><svg class="i" viewBox="0 0 20 20"><rect x="2" y="2" width="16" height="16" fill="#e2e6f8" stroke="#5058c0" stroke-dasharray="2 1"/><circle cx="10" cy="10" r="4.500" stroke="#555"/><path d="M13 13l4 4" stroke="#555"/><rect x="2" y="2" width="16" height="3" fill="#5058c0" stroke="none"/></svg></span>
    <span class="c22 ml2"><svg class="i" viewBox="0 0 20 20"><rect x="2" y="2" width="15" height="14" fill="#e4e6f2" stroke="#a8acc8"/><path d="M10 18c-3-3-3-8 0-9 1-1 3-1 4 0l3 2v4l-2 3z" fill="#e8cda8" stroke="#b08860"/></svg></span>
    <span class="c22 ml4"><svg class="i" viewBox="0 0 20 20"><rect x="2" y="2" width="16" height="16" fill="#e6ebff" stroke="#3a4fb0"/><rect x="2" y="2" width="16" height="3" fill="#3a4fb0"/><path d="M6 8h3v3H6zM11 8h3v3h-3zM6 13h3v3H6zM11 13h3v3h-3z" fill="#e34" stroke="none"/></svg></span>
    <span class="c10 ml1"><b class="down"></b></span>
    <span class="c22 ml2"><svg class="i" viewBox="0 0 20 20"><path d="M8 10l5-6 6 6-6 6z" fill="#cfe0f0" stroke="#6a88a8"/><path d="M1 4l7 3-7 3z" fill="#2aa344"/><path d="M1 11l7 3-7 3z" fill="#d02a2a"/></svg></span>
    <span class="c10 ml3"><b class="down"></b></span>
    <i class="tsep ml3"></i>
    <b class="down endc"></b>
  </section>

  <main class="main">
    <aside class="rail">
      <div class="rl h27"><svg class="r22" viewBox="0 0 20 20"><circle cx="10" cy="10" r="5" fill="none" stroke="#333" stroke-width="2"/><path d="M10 2v3M10 15v3M2 10h3M15 10h3M4.300 4.300l2 2M13.700 13.700l2 2M15.700 4.300l-2 2M6.300 13.700l-2 2" stroke="#333" stroke-width="2"/></svg></div>
      <div class="rl h41 mt15"><svg class="r28" viewBox="0 0 28 28"><path d="M6 3l5-2 4 2v5l-4 2-5-2zM2 10l4-2 4 2v5l-4 2-4-2zM18 17l4-2 4 2v5l-4 2-4-2z" fill="#f4c542" stroke="#a07a10"/><path d="M8 18v9M8 23h9M16 14h10" stroke="#1f3a8a" stroke-width="1.300"/></svg></div>
      <div class="rl h44 act"><svg class="r28" viewBox="0 0 28 28"><ellipse cx="9" cy="3" rx="5" ry="2" fill="#d6b0d8" stroke="#700a70"/><path d="M4 3v8c0 3 10 3 10 0V3" fill="#c88ccc" stroke="#700a70"/><path d="M9 15v12M9 21h6M16 12h11" stroke="#1f3a8a" stroke-width="1.300"/><circle cx="22" cy="21" r="4.500" fill="none" stroke="#a22a88" stroke-width="1.300"/><circle cx="22" cy="21" r="1.800" fill="none" stroke="#a22a88"/></svg></div>
      <div class="rl h42"><svg class="r30" viewBox="0 0 30 30"><path d="M2 8l5-4h4v20l-5 4H2z" fill="#ef8a22" stroke="#a85410"/><path d="M11 8l4-4h4v20l-4 4h-4z" fill="#34b84a" stroke="#1c7a2e"/><path d="M20 8l5-4h4v20l-5 4h-4z" fill="#2f8ae0" stroke="#1a5ca8"/></svg></div>
      <div class="rl h42 mt12"><svg class="r30" viewBox="0 0 30 30"><path d="M10 3c10 0 18 8 18 18" fill="none" stroke="#3a5fc0" stroke-width="2.500"/><path d="M10 8c7 0 13 6 13 13" fill="none" stroke="#3a5fc0" stroke-width="2"/><circle cx="10" cy="20" r="8.500" fill="#1f82d8" stroke="#0c5aa8"/><text x="10" y="25" class="inf">i</text></svg></div>
      <div class="rl h42 mt12"><svg class="r30" viewBox="0 0 30 30"><path d="M5 2h14l6 6v20H5z" fill="#fff" stroke="#1f6fb8" stroke-width="1.200"/><path d="M19 2v6h6" fill="#cfe4f8" stroke="#1f6fb8"/><circle cx="15" cy="18" r="6" fill="#3aa04a"/><path d="M10 16a6 6 0 0 1 10 0l-3 1a3 3 0 0 0-4 0z" fill="#2a7ac8"/></svg></div>
      <div class="rl h42 mt10"><svg class="r30" viewBox="0 0 30 30"><circle cx="15" cy="15" r="12" fill="#e6ebf8" stroke="#777" stroke-width="2"/><path d="M15 7v8h6" stroke="#111" stroke-width="2" fill="none"/><circle cx="15" cy="15" r="1.500"/></svg></div>
      <div class="rl h42 mt2"><svg class="r30" viewBox="0 0 30 30"><path d="M20 3 8 14l5 5 12-12z" fill="#777"/><path d="M6 8l16 16" stroke="#666" stroke-width="3"/><path d="M21 3h6l1 5-5-1z" fill="#444"/><path d="M5 23l5-4 4 3-3 4H5z" fill="#f2822a"/></svg></div>
    </aside>

    <section class="panel">
      <div class="panel-head"><span>部件导航器</span><i class="maxbox"></i></div>
      <div class="nav">
        <div class="nav-th"><span class="th1">名称<b class="up dk"></b></span><span class="th2">最新</span></div>
        <div class="tree">
          <svg class="conn" viewBox="0 0 235 140"><path d="M10.500 17v110M29.500 41v70M48.500 60v31M15 11h4M34 31h4M48.500 51h9M48.500 71h9M29.500 91h11M15 111h4M15 131h4" stroke="#888" stroke-dasharray="1 1" fill="none"/></svg>
          <div class="tr"><i class="xp">−</i><svg class="tc" viewBox="0 0 14 14"><use href="#ck"/></svg><svg class="ti16" viewBox="0 0 18 16"><rect x="4" y="1" width="13" height="11" fill="#f3f4fb" stroke="#6a76b8"/><rect x="1" y="3" width="13" height="12" fill="#dde2f6" stroke="#5a66a8"/><path d="M8 12h6M8 15v-3M11 12v3" stroke="#777"/></svg><span>图纸</span></div>
          <div class="tr l1"><i class="xp">−</i><svg class="tc" viewBox="0 0 14 14"><use href="#ck"/></svg><svg class="ti16" viewBox="0 0 18 16"><rect x="1" y="2" width="15" height="12" fill="#dde2f6" stroke="#7078b8"/><path d="M9 9h7v5H9z" fill="#eee" stroke="#7078b8"/></svg><span>工作表 "A3_1" (工作...</span><svg class="lat" viewBox="0 0 14 14"><use href="#ck"/></svg></div>
          <div class="tr l2"><svg class="tc" viewBox="0 0 14 14"><use href="#ck"/></svg><svg class="ti16" viewBox="0 0 18 16"><path d="M1 14 6 3l5-2 3 3-4 8z" fill="#aaa" stroke="#333"/><path d="M3 14h14l-3 2H2z" fill="#888" stroke="#333"/></svg><span>导入的 "Isometri...</span><svg class="lat" viewBox="0 0 14 14"><use href="#ck"/></svg></div>
          <div class="tr l2"><svg class="tc" viewBox="0 0 14 14"><use href="#ck"/></svg><svg class="ti16" viewBox="0 0 18 16"><rect x="2" y="1" width="13" height="14" fill="#e8e8e8" stroke="#222" stroke-width="1.300"/><path d="M6 1v14" stroke="#222"/><circle cx="12" cy="12" r="1.500" fill="#222"/></svg><span>导入的 "Top@3"</span><svg class="lat" viewBox="0 0 14 14"><use href="#ck"/></svg></div>
          <div class="tr l3"><span class="qu">?</span><svg class="ti16" viewBox="0 0 18 16"><use href="#fo"/></svg><span>过时</span></div>
          <div class="tr"><i class="xp plus">+</i><span class="gap4"></span><svg class="ti16f" viewBox="0 0 18 16"><use href="#fo"/></svg><span>用户表达式</span></div>
          <div class="tr"><i class="xp plus">+</i><span class="gap4"></span><svg class="ti16f" viewBox="0 0 18 16"><use href="#fo"/></svg><span>组</span></div>
        </div>
        <div class="sb sb1"><span class="ar">‹</span><i class="thumb t1"></i><span class="ar">›</span></div>
      </div>
      <div class="split"></div>
      <div class="sec s1">相关性</div>
      <div class="sec s2">细节</div>
      <div class="sec3">
        <div class="sec s3">预览</div>
        <div class="pvbox">没有可用的预览</div>
      </div>
      <div class="sb sb2"><span class="ar">‹</span><i class="thumb t2"></i><span class="ar">›</span></div>
    </section>

    <section class="work">
      <div class="doctabs">
        <span class="dt d1"><svg class="dti" viewBox="0 0 16 18"><use href="#blk"/></svg>杯子.prt<svg class="dci" viewBox="0 0 12 14"><use href="#dc"/></svg></span>
        <span class="dt d2"><svg class="dti" viewBox="0 0 18 18"><use href="#dw"/></svg>杯子_dwg2.prt<svg class="dci" viewBox="0 0 12 14"><use href="#dc"/></svg></span>
        <span class="dt d3"><svg class="dti" viewBox="0 0 16 18"><use href="#blk"/></svg>京刀1.prt<svg class="dci" viewBox="0 0 12 14"><use href="#dc"/></svg></span>
        <span class="dt d4"><svg class="dti" viewBox="0 0 18 18"><use href="#dw"/></svg>京刀1_dwg1.prt<svg class="dci" viewBox="0 0 12 14"><use href="#dc"/></svg><svg class="dx" viewBox="0 0 10 10"><path d="M1 1l8 8M9 1 1 9" stroke="#fff" stroke-width="2"/></svg></span>
      </div>
      <div class="view">
        <svg class="sheet" viewBox="285 204 1635 810" xmlns="http://www.w3.org/2000/svg">
          <rect x="769.500" y="251.500" width="796.500" height="562" fill="none" stroke="#a0a0a0"/>
          <rect x="769.500" y="251.500" width="796.500" height="562" fill="none" stroke="#333" stroke-width="1.500" stroke-dasharray="8 8"/>
          <rect x="817" y="260" width="740" height="544.500" fill="none" stroke="#000" stroke-width="2.200"/>
          <rect x="817" y="260" width="106" height="19" fill="none" stroke="#111" stroke-width="1"/>
          <rect x="911" y="347" width="285" height="41" fill="none" stroke="#000" stroke-width="2"/>
          <path d="M911 347H1196" stroke="#000" stroke-width="3"/>
          <path d="M1444.500 416.500V649L1414.500 666V432.500z" fill="none" stroke="#000" stroke-width="2"/>
          <path d="M1481 336.700H1492M1481 336.700 1486 345.700 1498 325.300" fill="none" stroke="#111"/>
          <text class="dr" x="1465 1473" y="345">其余</text>
          <g stroke="#111" stroke-width="1.100">
            <path d="M769 611.700H817M769 624H817M769 643.500H817M769 656.700H817M769 675.700H817M769 689H817M769 708.500H817M769 721H817M769 740.500H817M769 753.500H817M769 772.500H817M769 785.500H817"/>
          </g>
          <g class="dtx">
            <text x="769 777 785.500 794 802 810" y="621">借通用件登记</text>
            <text x="782 803" y="653">描图</text>
            <text x="782 803" y="685">校描</text>
            <text x="773 782 791 800 809" y="718">旧底图总号</text>
            <text x="782 803" y="750">签字</text>
            <text x="782 803" y="782">日期</text>
          </g>
          <g stroke="#111" stroke-width="1.400" fill="none">
            <path d="M1215 719.300H1557M1215 729H1329M1215 738.300H1329M1215 747.700H1329M1215 757.300H1329M1215 766.700H1329M1215 776.700H1329M1215 786H1329M1215 795.700H1329M1215 719.300V804M1230.700 719.300V766.700M1243.700 719.300V804M1281.700 719.300V804M1310 719.300V766.700M1329 719.300V804"/>
            <path d="M1329 769.300H1443M1443 719.300V804M1443 744H1557M1443 752.700H1557M1443 769.300H1557M1443 778.300H1557M1499 744V778.300M1528.300 744V769.300M1457.700 752.700V769.300M1473.300 752.700V769.300M1486.700 752.700V769.300"/>
          </g>
          <g class="dtt">
            <text x="1217.500 1224" y="764">标记</text><text x="1232 1238" y="764">处数</text>
            <text x="1251 1256 1261 1266 1271" y="764">更改文件号</text><text x="1289 1300" y="764">签字</text><text x="1316 1322" y="764">日期</text>
            <text x="1224 1232" y="774">设计</text><text x="1224 1232" y="784">校对</text><text x="1224 1232" y="793.500">审核</text><text x="1224 1232" y="803">批准</text>
            <text x="1462 1468 1474 1480" y="751">图样标记</text><text x="1508 1518" y="751">重量</text><text x="1537 1547" y="751">比例</text>
            <text x="1465 1476" y="776.500">共页</text><text x="1520 1531" y="776.500">第页</text>
          </g>
          <text class="dco" x="1446 1452.600 1459.200 1465.800 1472.400 1479 1485.600 1492.200 1498.800 1505.400 1512 1518.600 1525.200 1531.800 1538.400 1545 1551.600" y="795">西门子产品管理软件（上海）有限公司</text>
          <text class="sheetname" x="293" y="1011">"A3_1"</text>
        </svg>
        <div class="ime"><i class="grip"></i><span class="imec">中</span><svg class="imei" viewBox="0 0 22 22"><path d="M12 1c7 6 4 18-4 18-3 0-5-1-7-3 7 2 14-4 11-15z" fill="none" stroke="#222"/></svg><span class="imec pun">°,</span><span class="imec">简</span><svg class="imei" viewBox="0 0 22 22"><circle cx="11" cy="11" r="9.500" fill="none" stroke="#222"/><circle cx="7.500" cy="8.500" r="1" fill="#222"/><circle cx="14.500" cy="8.500" r="1" fill="#222"/><path d="M6 13c2 4 8 4 10 0" fill="none" stroke="#222"/></svg><svg class="imei" viewBox="0 0 22 22"><path d="M9 1h4l1 3 3-1 2 3-2 3 2 2-2 3-3-1-1 3H9l-1-3-3 1-2-3 2-2-2-3 2-3 3 1z" fill="none" stroke="#222" transform="translate(0 1)"/><circle cx="11" cy="10.500" r="3" fill="none" stroke="#222"/></svg></div>
        <div class="vbar"><i class="vtop"></i></div>
      </div>
    </section>
  </main>

  <footer class="status">
    <span>选择对象并使用 MB3，或双击，或按住并拖动来移动视图、尺寸或注释</span>
    <span class="st-i"><svg class="s16" viewBox="0 0 16 16"><rect width="16" height="16" fill="#ccc"/><path d="M3 3h3v3H3zM9 3h3v3H9zM6 6h3v3H6zM3 9h3v3H3zM9 9h3v3H9z" fill="#fff"/></svg><svg class="s16" viewBox="0 0 16 16"><path d="M1 4V1h3M12 1h3v3M1 12v3h3M15 12v3h-3" stroke="#888" fill="none"/><rect x="4" y="4" width="8" height="8" fill="#3f7fd0" stroke="#556"/><rect x="4" y="4" width="8" height="2" fill="#ccd"/></svg></span>
  </footer>

  <footer class="taskbar">
    <span class="tk w32"><svg class="wn" viewBox="0 0 17 17"><path d="M0 2.500 7 1.500V8H0zM8 1.400 17 0v8H8zM0 9h7v6.500L0 14.500zM8 9h9v8l-9-1.300z" fill="#fff"/></svg></span>
    <span class="tk w36"><svg class="tb24" viewBox="0 0 24 24"><path d="M1 5h8l2 2h12v14H1z" fill="#f4c33c"/><path d="M1 9h22v12H1z" fill="#f9d76a"/><path d="M6 15h12v6h-3v-3H9v3H6z" fill="#2a8ed8"/></svg></span>
    <span class="tk w36"><svg class="tb24" viewBox="0 0 24 24"><circle cx="12" cy="12" r="10.500" fill="#49a92f"/><circle cx="12" cy="12" r="7.500" fill="#fff"/><path d="M6 12h12M8 8h8" stroke="#49a92f" stroke-width="1.800"/><path d="M16 15c-2 3-6 3-8 0" stroke="#49a92f" stroke-width="1.800" fill="none"/></svg></span>
    <span class="tk act w48"><svg class="tb24" viewBox="0 0 24 24"><circle cx="12" cy="14" r="9" fill="#2a8ad8"/><path d="M5 16c2 3 6 3 8 1l3-5" fill="#fff" opacity=".8"/><path d="M1 21c10 2 18-5 22-13-3 8-10 13-20 11" fill="none" stroke="#e8a020" stroke-width="2.400"/><path d="M6 0h11l-4 11z" fill="#d42030"/></svg></span>
    <span class="tk ul w40 ml5"><svg class="tb24" viewBox="0 0 24 24"><defs><linearGradient id="eg" x1="0" y1="0" x2="1" y2="1"><stop offset="0" stop-color="#35c1a8"/><stop offset="1" stop-color="#0a5ec0"/></linearGradient></defs><circle cx="12" cy="12" r="11.500" fill="url(#eg)"/><path d="M4 15c0-6 5-9 10-8 4 1 6 5 5 8-4 1-9 1-9-2-3 3 0 8 5 8-5 3-11 0-11-6z" fill="#143a7a"/></svg></span>
    <span class="tk ul w40 ml9"><svg class="tb24" viewBox="0 0 24 24"><ellipse cx="9" cy="9" rx="8.500" ry="7.500" fill="#4fd24a"/><path d="M4 14l-1 4 5-2z" fill="#4fd24a"/><circle cx="6.500" cy="8" r="1.200" fill="#1a3a1a"/><circle cx="11.500" cy="8" r="1.200" fill="#1a3a1a"/><ellipse cx="17" cy="15" rx="7" ry="6" fill="#e8e8e8"/><circle cx="15" cy="14" r="1" fill="#555"/><circle cx="19" cy="14" r="1" fill="#555"/></svg></span>
    <span class="tray">
      <svg class="cloud" viewBox="0 0 24 18"><path d="M6 17a5 5 0 0 1-1-10A7 7 0 0 1 18 6a5.500 5.500 0 0 1 0 11z" fill="#9ecdf0"/><path d="M6 10a7 7 0 0 1 12-4" fill="none" stroke="#d4ecfa" stroke-width="2"/></svg>
      <span class="wt">21°C&nbsp; 阴</span>
      <svg class="trg ml9" viewBox="0 0 16 16"><path d="M2 11 8 5l6 6" fill="none" stroke="#fff" stroke-width="1.300"/></svg>
      <svg class="trg18 ml7" viewBox="0 0 18 18"><circle cx="9" cy="9" r="8.500" fill="#3f9a2a"/><circle cx="9" cy="8" r="7.500" fill="#f4d820"/><path d="M9 4v8M5 8h8" stroke="#137a1c" stroke-width="2.400"/></svg>
      <svg class="trg18 ml4" viewBox="0 0 18 18"><path d="M1 4h15v9H1zM4 16h9" fill="none" stroke="#fff"/><rect x="1" y="4" width="6" height="5" fill="#1a2a44" stroke="#fff"/></svg>
      <svg class="trg18 ml10" viewBox="0 0 18 18"><path d="M2 7v4h3l4 4V3L5 7zM11 5c2 2 2 6 0 8M13 3c3 3 3 9 0 12" fill="none" stroke="#fff"/></svg>
      <span class="imet">中</span>
      <span class="clock"><span>9:32</span><span>2022/4/13</span></span>
    </span>
    <span class="wm">UG爱好者论坛@零先森</span>
  </footer>
</div>
</body>
</html>
```

FILE: styles.css
```css
*{box-sizing:border-box}
html,body{margin:0;padding:0;background:#fff}
body{width:1920px;height:1080px;overflow:hidden;font:12px/1.2 "Noto Sans","Noto Sans CJK SC",sans-serif;color:#222}
.defs{display:none}
svg{display:block;flex:none}
b,i,em{font-style:normal;font-weight:normal}
.app{display:flex;flex-direction:column;height:1080px}

.i{width:20px;height:20px;fill:none;stroke:#3c3c3c;stroke-width:1}
.i text{stroke:none}
.r{stroke:#c9343a}
.dot{fill:#cc2a2a;stroke:none}
.s16{width:16px;height:16px;fill:none}
.big{width:32px;height:32px}
.tiny{font:bold 6.5px "Liberation Sans",sans-serif;text-anchor:middle}
.tiny8{font:bold 6.500px "Liberation Sans",sans-serif;text-anchor:middle}
.tiny10{font:bold 11px "Liberation Sans",sans-serif;text-anchor:middle}
.red{fill:#c9343a}.blk{fill:#222}.blu{fill:#4a50c0}.gry{fill:#aaa}
.qm{font:bold 12px "Liberation Sans",sans-serif;fill:#fff;text-anchor:middle}
.bigA{font:bold 28px "Liberation Serif",serif;fill:#333;text-anchor:middle}
.aa{font:bold 13px "Liberation Sans",sans-serif;fill:#3f45b0;text-anchor:middle}
.ab{font:italic bold 22px "Liberation Serif",serif;fill:#3f45b0;text-anchor:middle}
.inf{font:bold 16px "Liberation Serif",serif;fill:#fff;text-anchor:middle}

.down,.up,.more{display:block;flex:none;width:0;height:0}
.down{border-left:3.500px solid transparent;border-right:3.500px solid transparent;border-top:4px solid #222}
.down.dim{border-top-color:#aaa}
.up{border-left:4px solid transparent;border-right:4px solid transparent;border-bottom:4px solid #bbb}
.up.dk{border-bottom-color:#222;border-left-width:5px;border-right-width:5px;border-bottom-width:5px}
.more{width:7px;height:7px;border-top:1px solid #222}
.more::after{content:"";display:block;width:0;height:0;margin-top:2px;border-left:3.500px solid transparent;border-right:3.500px solid transparent;border-top:3px solid #222}

/* title bar */
.titlebar{height:26px;display:flex;align-items:center;background:#fff;flex:none}
.nx{margin-left:4px;width:32px;font:bold 23px/26px "Liberation Sans",sans-serif;color:#6d8697}
.tv{display:block;width:1px;height:20px;background:#ddd;flex:none}
.t{width:23px;height:24px;display:flex;align-items:center;justify-content:center;flex:none}
.t .i{width:18px;height:18px}
.cr{width:12px;display:flex;justify-content:center;flex:none}
.tt{font-size:11px;line-height:1;white-space:nowrap}
.m1{margin-left:1px}.m2{margin-left:2px}.m25{margin-left:2.500px}.m3{margin-left:3px}.m5{margin-left:5px}.m6{margin-left:6px}
.apptitle{margin-left:636px;font-size:13px;white-space:nowrap;width:73px}
.siemens{margin-left:auto;margin-right:20px;font:bold 13.500px "Liberation Sans",sans-serif;color:#0e9999}
.wc{width:24px;display:flex;justify-content:center;flex:none}
.wc:last-child{margin-right:1px}

/* tabs */
.tabs{height:28px;background:#dcdcdc;display:flex;align-items:stretch;flex:none;font-size:13px}
.file{width:81px;background:#569fb8;color:#fff;display:flex;align-items:center;justify-content:center;margin-right:1px}
.tab{padding:0 13px;display:flex;align-items:center;color:#222}
.tab.active{background:#fff;color:#0b7a9c;width:53px;justify-content:center;padding:0;border-top:1px solid #bbb}
.search{margin-left:auto;margin-top:5px;width:125px;height:19px;border:1px solid #aaa;background:#fff;font-size:12px;display:flex;align-items:center;padding-left:2px;justify-content:space-between;padding-right:3px}
.srch{width:14px;height:14px}
.ti{width:28px;display:flex;align-items:center;justify-content:center;flex:none}
.search + .ti{margin-left:3px}
.cap{display:flex;align-items:center;font-size:12px;margin-left:1px;margin-right:4px;gap:1px;width:46px}
.cap .i{width:16px;height:16px;stroke:none}
.ti .i{stroke:#333}

/* ribbon */
.ribbon{height:95px;padding-top:5px;display:flex;align-items:flex-start;background:#fff;border-bottom:2px solid #ddd;flex:none}
.group{height:84px;border-right:2px solid #e2e2e2;flex:none;display:flex;flex-direction:column}
.g1{width:73px}.g2{width:245px}.g3{width:129px}.g4{width:167px}.g5{width:237px}.g6{width:109px}.g7{width:60px}.g8{width:104px}.g9{width:399px}.g10{width:288px}
.body{height:70px;display:flex;align-items:flex-start;flex:none}
.foot{height:14px;display:flex;align-items:flex-start;font-size:11px;line-height:18px;color:#0d7da3;white-space:nowrap}
.foot .down{margin-left:auto;margin-right:6px;margin-top:6px}
.pl2{padding-left:2px}.pl41{padding-left:41px}.pl45f{padding-left:45px}.pl45{padding-left:45px}.pl64{padding-left:64px}.pl99{padding-left:99px}.pl102{padding-left:102px}.pl56{padding-left:56px}.pl139{padding-left:139px}
.body.pl45{padding-left:4.500px}
.lg{display:flex;flex-direction:column;align-items:center;font-size:11px;line-height:16px;white-space:nowrap;width:73px;padding-top:1px}
.lg>span{margin-top:3px;height:16px}
.lg>.down{margin-top:4px}
.w66{width:66px}.w44{width:44px}.w30{width:30px}.wfull{width:58px}
.ml4{margin-left:4px}.ml5{margin-left:5px}.ml6{margin-left:6px}.ml7{margin-left:7px}.ml8{margin-left:8px}.ml9{margin-left:9px}.ml10{margin-left:10px}.ml12{margin-left:12px}.ml13{margin-left:13px}.ml14{margin-left:14px}.ml1{margin-left:1px}.ml2{margin-left:2px}.ml3{margin-left:3px}
.ml55{margin-left:5.500px}.ml45{margin-left:4.500px}
.c{width:23px;height:24px;display:flex;align-items:center;justify-content:center;flex:none}
.c .i{width:19px;height:19px}
.c22{width:22px;height:24px;display:flex;align-items:center;justify-content:center;flex:none}
.ic2,.ic3,.ic4{display:grid;grid-auto-rows:21.500px;margin-top:-2px}
.ic2{grid-template-columns:25px 25px}
.ic3{grid-template-columns:26px 26px 26px}
.ic4{grid-template-columns:25px 25px 25px 25px 14px}
.ic2 .c,.ic3 .c,.ic4 .c{width:auto;height:21.500px}
.ic2 .i,.ic3 .i,.ic4 .i{width:18px;height:18px}
.cs{display:flex;align-items:center;justify-content:center}
.sk{width:98px;margin-left:13px;display:flex;flex-direction:column;align-items:center}
.dd{margin-top:6px;width:98px;height:20px;border:1px solid #aaa;display:flex;align-items:center;justify-content:space-between;padding:0 8px 0 4px;font-size:11px}
.sklabel{font-size:11px;line-height:16px;margin-top:10px}
.gal{margin-left:12px;width:92px;height:66px;border:1px solid #ddd;display:grid;grid-template-columns:repeat(4,22.500px);grid-auto-rows:21.300px}
.gal .c22{width:auto;height:auto}
.gal .i{width:18px;height:18px}
.scr{margin-left:5px;width:8px;height:66px;display:flex;flex-direction:column;align-items:center;padding-top:9px;gap:15px}
.col{flex-direction:column;padding-top:0;margin-top:-4px;height:74px}
.rw{height:22px;display:flex;align-items:center;font-size:11px;padding-left:13px;gap:4px;white-space:nowrap}
.col2{flex-direction:column;padding-top:3px;gap:7px}
.pl25{padding-left:2.500px}.pl35{padding-left:3.500px}
.ro{display:flex;align-items:center;height:24px}
.v{display:block;width:1px;height:24px;background:#ddd;flex:none}
.mx3{margin:0 2.500px 0 3px}.mr2{margin-right:0}.mr1{margin-right:1px}.mx1{margin:0 1px}
.s4{margin:0 2px}.s5{margin:0 2px}.s6{margin:0 2.500px}.s7{margin:0 3px}
.gend{flex:1;display:flex;justify-content:flex-end;padding:76px 5px 0 0}
.nm{display:flex;flex-direction:column;align-items:center;font:bold 7.500px/7px "Liberation Sans",sans-serif;color:#333}
.nm u{text-decoration:none;font-size:8.500px;line-height:9px}
.nm em{display:block;font-size:7px;line-height:6px;text-align:center}
.rd{color:#b0403a}
.hb{display:flex;flex-direction:column;align-items:center;font:bold 8px/9px "Liberation Sans",sans-serif;color:#4a50c8;white-space:nowrap}
.hb small{font-size:6.500px;line-height:7px}

/* toolbar */
.toolbar{height:31px;display:flex;align-items:center;background:#fff;border-bottom:2px solid #9a9a9a;flex:none}
.toolbar .i{width:18px;height:18px}
.c24{width:24px;display:flex;justify-content:center;flex:none}
.menu{font-size:12px;width:40px;white-space:nowrap}
.tsep{display:block;width:1px;height:24px;background:#ddd;flex:none}
.combo{height:20px;border:1px solid #aaa;display:flex;align-items:center;justify-content:space-between;padding:0 6px 0 3px;flex:none;font-size:12px}
.w133{width:133px;margin-left:12px;justify-content:flex-end}
.w140{width:140px;margin-left:8px}
.c10{width:10px;display:flex;justify-content:center;flex:none}
.on{width:24px;height:26px;background:#cae4ea;border:1px solid #aed2da;display:flex;align-items:center;justify-content:center;flex:none}
.endc{margin-left:auto;margin-right:5px}

/* main */
.main{height:838px;display:flex;flex:none}
.rail{width:32px;background:#dcdcdc;border-right:1px solid #999;flex:none;display:flex;flex-direction:column;align-items:center}
.rl{width:100%;display:flex;align-items:center;justify-content:center;flex:none}
.h27{height:27px}.h41{height:41px}.h44{height:44px}.h42{height:42px}
.mt15{margin-top:15px}.mt12{margin-top:12px}.mt10{margin-top:10px}.mt2{margin-top:2px}
.act{background:#fff;border:1px solid #b0b0b0;border-right:0;width:30px;margin-left:2px;margin-right:-1px}
.r22{width:18px;height:18px}
.r28{width:26px;height:28px}
.r30{width:28px;height:28px}

.panel{width:252px;background:#fff;flex:none;padding-left:6px;border-right:2px solid #999}
.panel-head{height:29px;display:flex;align-items:center;padding-left:4px;font-size:12px;color:#333}
.maxbox{display:block;margin-left:152px;width:12px;height:11px;border:1px solid #111;border-top-width:2px}
.nav{width:235px;height:501px;border:1px solid #ddd;border-top-width:2px;border-bottom-width:1px}
.nav-th{height:20px;background:#f0f0f0;display:flex;border-bottom:1px solid #ddd;border-right:1px solid #ddd;width:233px}
.th1{width:201px;border-right:1px solid #ccc;padding-left:6px;display:flex;align-items:center;gap:16px}
.th2{padding-left:7px;display:flex;align-items:center}
.tree{position:relative;height:461px;background:
  linear-gradient(90deg,transparent 200px,#e6e6e6 200px,#e6e6e6 201px,transparent 201px),
  repeating-linear-gradient(#fff 0,#fff 19px,#e6e6e6 19px,#e6e6e6 20px,#f9f9f9 20px,#f9f9f9 39px,#e6e6e6 39px,#e6e6e6 40px)}
.conn{position:absolute;left:0;top:0;width:235px;height:140px}
.tr{height:20px;display:flex;align-items:center;padding-left:6px;position:relative;white-space:nowrap}
.xp{display:flex;align-items:center;justify-content:center;width:10px;height:10px;background:#fff;border:1px solid #ccc;font:11px/1 "Liberation Sans",sans-serif;color:#222;flex:none}
.tr .tc{width:13px;height:13px;margin-left:6px}
.ti16{width:17px;height:16px;margin-left:1px;margin-right:2px}
.ti16f{width:17px;height:16px;margin-right:2px}
.gap4{width:4px}
.l1{padding-left:25px}
.l2{padding-left:60px}
.l2 .tc{margin-left:0}
.l3{padding-left:43px}
.qu{width:10px;font:bold 15px/1 "Liberation Sans",sans-serif;color:#efd818;-webkit-text-stroke:.3px #665;flex:none}
.l3 .ti16{margin-left:2px}
.lat{position:absolute;left:207px;top:3px;width:13px;height:13px}
.tr>span{font-size:12px;color:#222}
.sb{display:flex;align-items:center;height:16px;background:#f0f0f0}
.sb1{width:233px}
.ar{width:17px;text-align:center;font:bold 16px/14px "Liberation Sans",sans-serif;color:#666;flex:none}
.ar:last-child{margin-left:auto}
.thumb{display:block;height:16px;background:#ccc}
.t1{width:113px}
.t2{width:174px}
.split{width:235px;height:5px;border:1px solid #aaa;background:#d8d8d8}
.sec{font-size:14px;line-height:20px;color:#0d7da3;padding-left:7px;width:235px}
.s1{height:24px;padding-top:3px;border-bottom:2px solid #d5d5d5}
.s2{height:25px;padding-top:2px;border-bottom:3px solid #d5d5d5}
.s3{height:27px;padding-top:2px;border:0}
.sec3{width:235px;height:230px;border-left:1px solid #ddd;border-bottom:2px solid #ddd}
.sec3 .s3{padding-left:6px}
.pvbox{margin-left:11px;height:185px;border:1px solid #ddd;border-right:0;display:flex;align-items:center;justify-content:center;font-size:12px;padding-left:21px}
.sb2{width:235px;margin-top:1px;height:17px}
.sb2 .t2{height:17px}

.work{flex:1;display:flex;flex-direction:column;min-width:0}
.doctabs{height:24px;display:flex;align-items:flex-start;border-bottom:2px solid #569fb8;flex:none;font-size:12px}
.dt{height:22px;display:flex;align-items:center;white-space:nowrap;color:#222}
.dti{width:15px;height:16px;margin-right:6px}
.dci{width:10px;height:12px;margin-left:7px;color:#333}
.d1{margin-left:4px}.d2{margin-left:26px}.d3{margin-left:28px}
.d4{margin-left:22px;width:150px;background:#569fb8;color:#fff;padding-left:4px}
.d4 .dci{color:#fff}
.dx{width:9px;height:9px;margin-left:5px}
.view{position:relative;height:812px;background:#ccc;border-left:1px solid #999;border-bottom:2px solid #888;flex:none}
.sheet{width:1635px;height:810px}
.dr{font:bold 7.500px "Noto Sans CJK SC",sans-serif;fill:#111}
.dtx text{font:bold 7.500px "Noto Sans CJK SC",sans-serif;fill:#111}
.dtt text{font:bold 5.500px "Noto Sans CJK SC",sans-serif;fill:#111}
.dco{font:bold 6.500px "Noto Sans CJK SC",sans-serif;fill:#111}
.sheetname{font:14px "Noto Sans",sans-serif;fill:#222}
.ime{position:absolute;right:0;top:704px;width:213px;height:32px;background:#dcdcdc;display:flex;align-items:center;padding-left:7px}
.grip{display:block;width:4px;height:16px;border-left:1px solid #888;border-right:1px solid #888;margin-right:12px}
.imec{width:26px;font:20px/1 "Noto Sans CJK SC",sans-serif;color:#222;text-align:center;margin-right:12px;white-space:nowrap}
.imec:nth-of-type(1){width:20px}
.pun{width:20px;margin-right:6px}
.imei{width:22px;height:22px;margin-right:10px}
.vbar{position:absolute;right:2px;top:323px;width:8px;height:57px;border-radius:4px;border:1px solid #eee;overflow:hidden;background:repeating-linear-gradient(#2fb85a 0,#2fb85a 2px,#a9dcb9 2px,#a9dcb9 3px)}
.vtop{display:block;height:15px;background:#555}

/* status */
.status{height:22px;background:#fff;display:flex;align-items:center;padding-left:3px;font-size:12px;font-weight:500;color:#222;flex:none;white-space:nowrap}
.st-i{margin-left:auto;margin-right:55px;display:flex;gap:5px}

/* taskbar */
.taskbar{height:40px;position:relative;display:flex;align-items:stretch;background:linear-gradient(90deg,#233a44 0,#233a44 40%,#1a2842 85%);flex:none}
.tk{display:flex;align-items:center;justify-content:center;flex:none}
.w32{width:48px}.w36{width:50px}
.w48{width:48px}.w40{width:40px}
.tk .wn{width:16px;height:16px}
.tb24{width:24px;height:24px}
.taskbar .act{width:48px;margin-left:2px;margin-right:0;background:#4c6069;border:0;border-bottom:2px solid #63a6d9}
.ul{border-bottom:2px solid #63a6d9}
.tray{margin-left:auto;display:flex;align-items:center;color:#fff;padding-right:13px;white-space:nowrap}
.cloud{width:23px;height:18px}
.wt{font-size:14px;margin-left:8px;width:60px}
.trg{width:16px;height:16px}
.trg18{width:18px;height:18px}
.imet{font-size:14px;margin-left:5px;margin-right:9px}
.clock{display:flex;flex-direction:column;align-items:center;font-size:12px;line-height:20px;width:60px;margin-top:-1px}
.wm{position:absolute;left:1766px;top:20px;font-size:13.500px;letter-spacing:.5px;color:rgba(255,255,255,.55);white-space:nowrap}
```
